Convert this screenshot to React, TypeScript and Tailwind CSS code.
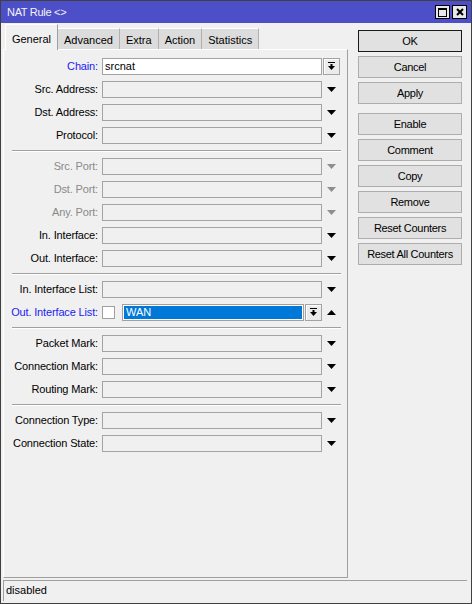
import type { ReactNode } from "react";

type Row = {
  label: string;
  tone?: "blue" | "gray";
  value?: string;
  kind?: "combo" | "arrow" | "iflist";
};

const groups: Row[][] = [
  [
    { label: "Chain:", tone: "blue", value: "srcnat", kind: "combo" },
    { label: "Src. Address:" },
    { label: "Dst. Address:" },
    { label: "Protocol:" },
  ],
  [
    { label: "Src. Port:", tone: "gray" },
    { label: "Dst. Port:", tone: "gray" },
    { label: "Any. Port:", tone: "gray" },
    { label: "In. Interface:" },
    { label: "Out. Interface:" },
  ],
  [
    { label: "In. Interface List:" },
    { label: "Out. Interface List:", tone: "blue", kind: "iflist" },
  ],
  [
    { label: "Packet Mark:" },
    { label: "Connection Mark:" },
    { label: "Routing Mark:" },
  ],
  [{ label: "Connection Type:" }, { label: "Connection State:" }],
];

const buttons = [
  ["OK", "Cancel", "Apply"],
  ["Enable", "Comment", "Copy", "Remove", "Reset Counters", "Reset All Counters"],
];

const tabs = ["Advanced", "Extra", "Action", "Statistics"];

const DownArrow = ({ gray }: { gray?: boolean }) => (
  <svg width="9" height="5" viewBox="0 0 9 5">
    <polygon points="0,0 9,0 4.5,5" fill={gray ? "#8e8e8e" : "#000"} />
  </svg>
);

const UpArrow = () => (
  <svg width="9" height="5" viewBox="0 0 9 5">
    <polygon points="0,5 9,5 4.5,0" fill="#000" />
  </svg>
);

const ComboButton = () => (
  <div className="ml-[1px] flex h-[17px] w-[17px] items-center justify-center border border-[#a3a3a3] bg-[#ebebeb] shadow-[inset_1px_1px_0_#fff]">
    <svg width="9" height="9" viewBox="0 0 9 9">
      <rect x="1" y="0" width="7" height="1" fill="#000" />
      <rect x="3.5" y="2" width="2" height="2" fill="#000" />
      <polygon points="1,4 8,4 4.5,8" fill="#000" />
    </svg>
  </div>
);

const Separator = () => (
  <div className="ml-[8px] h-[2px] w-[329px] border-t border-b border-t-[#a0a0a0] border-b-white" />
);

const Field = ({ row }: { row: Row }) => {
  const labelColor =
    row.tone === "blue" ? "text-[#1c1cf0]" : row.tone === "gray" ? "text-[#8a8a8a]" : "text-black";

  let control: ReactNode;
  if (row.kind === "iflist") {
    control = (
      <>
        <div className="h-[13px] w-[13px] border border-[#a0a0a0] bg-white" />
        <div className="ml-[7px] h-[17px] w-[182px] border border-[#a0a0a0] bg-white p-px">
          <div className="flex h-full items-center bg-[#0078d7] pl-[2px] text-white">WAN</div>
        </div>
        <ComboButton />
        <div className="flex w-[19px] justify-center">
          <UpArrow />
        </div>
      </>
    );
  } else {
    control = (
      <>
        <div
          className={`flex h-[17px] w-[220px] items-center border border-[#a3a3a3] pl-[2px] ${
            row.kind === "combo" ? "bg-white" : "bg-[#f0f0f0]"
          }`}
        >
          {row.value}
        </div>
        {row.kind === "combo" ? (
          <ComboButton />
        ) : (
          <div className="flex w-[19px] justify-center">
            <DownArrow gray={row.tone === "gray"} />
          </div>
        )}
      </>
    );
  }

  return (
    <div className="flex h-[17px] items-center">
      <div className={`w-[98px] pr-[4px] text-right whitespace-nowrap tracking-[-0.15px] ${labelColor}`}>
        {row.label}
      </div>
      {control}
    </div>
  );
};

const Btn = ({ label, primary }: { label: string; primary?: boolean }) => (
  <div
    className={`flex h-[22px] w-[104px] items-center justify-center border bg-[#e1e1e1] tracking-[-0.3px] ${
      primary ? "border-[#1a1a1a]" : "border-[#adadad]"
    }`}
  >
    {label}
  </div>
);

export default function App() {
  return (
    <div className="flex h-[604px] w-[472px] flex-col border border-[#404040] bg-[#f0f0f0] font-['Liberation_Sans',Arial,sans-serif] text-[11px] text-black">
      <div className="flex h-[22px] shrink-0 items-center justify-between bg-[#4c4fc8] pl-[6px] pr-[4px] text-[11px] text-[#f4f4f4]">
        <span className="tracking-[-0.3px]">NAT Rule &lt;&gt;</span>
        <div className="flex gap-[2px]">
          <div className="flex h-[14px] w-[15px] items-center justify-center border border-black bg-[#e8e8e8]">
            <div className="h-[9px] w-[9px] border border-t-2 border-black" />
          </div>
          <div className="flex h-[14px] w-[15px] items-center justify-center border border-black bg-[#e8e8e8]">
            <svg width="8" height="8" viewBox="0 0 8 8">
              <path d="M1 1 L7 7 M7 1 L1 7" stroke="#000" strokeWidth="2" />
            </svg>
          </div>
        </div>
      </div>

      <div className="flex flex-1 pt-[1px]">
        <div className="ml-[2px] flex w-[345px] flex-col">
          <div className="flex h-[25px] items-end pl-[2px]">
            <div className="relative z-10 -mb-px flex h-[26px] w-[53px] items-start justify-center border-t border-l border-r border-t-white border-l-white border-r-[#a0a0a0] bg-[#f0f0f0] pt-[6px]">
              General
            </div>
            {tabs.map((t) => (
              <div
                key={t}
                className="flex h-[21px] items-center border-t border-r border-t-white border-r-[#b0b0b0] bg-[#dcdcdc] px-[6px] pt-[2px]"
              >
                {t}
              </div>
            ))}
          </div>
          <div className="flex h-[529px] flex-col gap-[6px] border border-t-white border-l-white border-r-[#a0a0a0] border-b-[#a0a0a0] pt-[8px]">
            {groups.map((g, gi) => (
              <div key={gi} className="flex flex-col gap-[6px]">
                {gi > 0 && <Separator />}
                {g.map((r) => (
                  <Field key={r.label} row={r} />
                ))}
              </div>
            ))}
          </div>
        </div>

        <div className="ml-[10px] mt-[6px] flex flex-col gap-[9px]">
          {buttons.map((col, ci) => (
            <div key={ci} className="flex flex-col gap-[4px]">
              {col.map((b) => (
                <Btn key={b} label={b} primary={b === "OK"} />
              ))}
            </div>
          ))}
        </div>
      </div>

      <div className="mb-[2px] ml-[2px] flex h-[21px] w-[464px] shrink-0 items-center border-t border-l border-t-[#a0a0a0] border-l-[#a0a0a0] pb-[1px] pl-[2px]">
        disabled
      </div>
    </div>
  );
}
